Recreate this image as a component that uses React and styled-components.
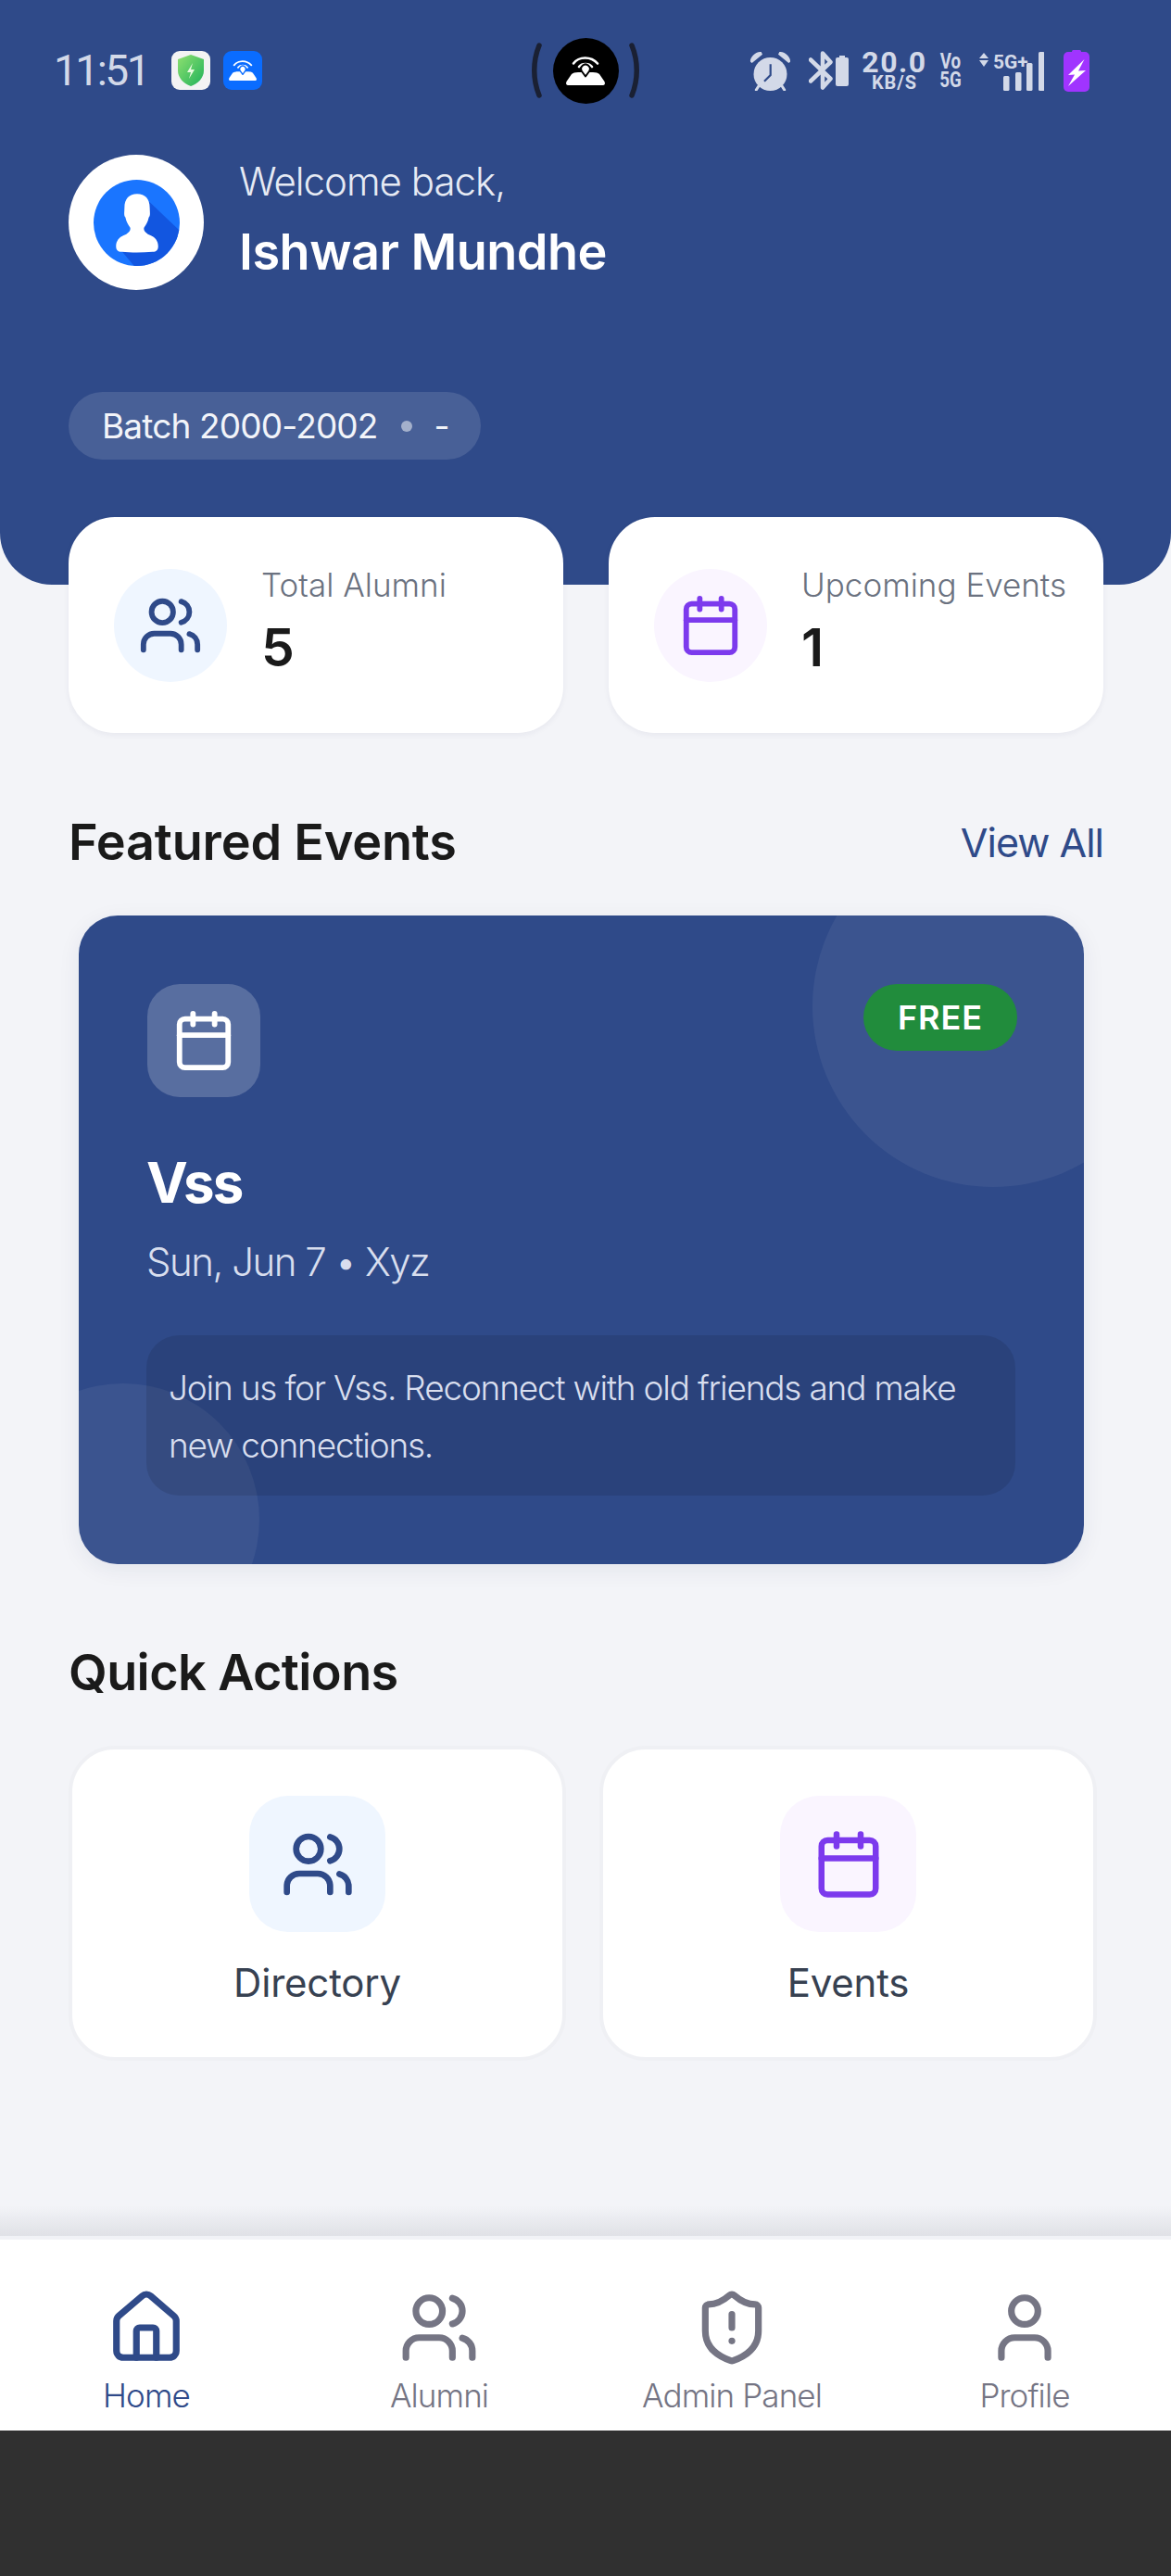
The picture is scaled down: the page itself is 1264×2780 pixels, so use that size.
import styled, { createGlobalStyle } from 'styled-components'
import { Users, Calendar, House, ShieldAlert, User } from 'lucide-react'

const NAVY = '#2f4a89'
const PURPLE = '#7c3aed'
const GREY = '#757584'
const STATUS = '#d3d9e8'

const GlobalStyle = createGlobalStyle`
    html, body {
        margin: 0;
        padding: 0;
        background: #f3f4f8;
        font-family: Inter, "Noto Sans", sans-serif;
    }
    * { box-sizing: border-box; }
`
const Page = styled.div`
    width: 1264px;
    height: 2780px;
    display: flex;
    flex-direction: column;
    background: #f3f4f8;
    overflow: hidden;
`
const Header = styled.header`
    height: 631px;
    flex-shrink: 0;
    background: ${NAVY};
    border-radius: 0 0 56px 56px;
`
const StatusBar = styled.div`
    height: 152px;
    display: grid;
    grid-template-columns: 514px 120px 1fr;
    align-items: center;
    padding: 0 88px 0 58px;
`
const StatusLeft = styled.div`
    display: flex;
    align-items: center;
`
const Clock = styled.span`
    width: 95px;
    margin-right: 32px;
    font-family: Roboto, sans-serif;
    font-size: 46px;
    letter-spacing: -2.5px;
    color: ${STATUS};
`
const AppBadge = styled.span`
    width: 42px;
    height: 42px;
    margin-right: 14px;
    border-radius: 9px;
    display: flex;
    align-items: center;
    justify-content: center;
    background: ${({ $bg }) => $bg};
`
const Island = styled.div`
    width: 120px;
    display: flex;
    align-items: center;
    justify-content: space-between;
`
const IslandDot = styled.span`
    width: 71px;
    height: 71px;
    border-radius: 50%;
    background: #000;
    display: flex;
    align-items: center;
    justify-content: center;
`
const StatusRight = styled.div`
    display: flex;
    align-items: center;
    justify-content: flex-end;
    gap: 15px;
`
const BtGroup = styled.span`
    display: flex;
    align-items: center;
    gap: 3px;
    margin-left: 4px;
`
const NetSpeed = styled.span`
    width: 69px;
    display: flex;
    flex-direction: column;
    align-items: center;
    font-family: Roboto, sans-serif;
    font-weight: 700;
    color: ${STATUS};
`
const SpeedValue = styled.span`
    font-size: 32px;
    line-height: 26px;
    letter-spacing: 1.5px;
`
const SpeedUnit = styled.span`
    font-size: 20px;
    line-height: 18px;
    letter-spacing: 1px;
`
const Volte = styled.span`
    width: 24px;
    margin: 0 -1px;
    display: flex;
    flex-direction: column;
    align-items: center;
    font-family: Roboto, sans-serif;
    font-weight: 700;
    font-size: 24px;
    line-height: 20px;
    transform: scaleX(0.78);
    color: ${STATUS};
`
const Signal = styled.span`
    position: relative;
    width: 71px;
    height: 44px;
    margin: 0 6px 0 4px;
    display: block;
`
const SignalLabel = styled.span`
    position: absolute;
    left: 16px;
    top: 2px;
    font-family: Roboto, sans-serif;
    font-weight: 700;
    font-size: 21px;
    line-height: 22px;
    color: ${STATUS};
`
const Profile = styled.div`
    margin: 15px 0 0 74px;
    display: flex;
    align-items: center;
    gap: 38px;
`
const Avatar = styled.div`
    width: 146px;
    height: 146px;
    border-radius: 50%;
    background: #fff;
    display: flex;
    align-items: center;
    justify-content: center;
`
const Greeting = styled.div`
    margin-bottom: 7px;
    display: flex;
    flex-direction: column;
`
const Welcome = styled.span`
    font-size: 42px;
    line-height: 56px;
    font-weight: 300;
    letter-spacing: -1px;
    color: #e6eaf4;
`
const Name = styled.span`
    margin-top: 15px;
    font-size: 54px;
    line-height: 66px;
    font-weight: 600;
    letter-spacing: -0.5px;
    color: #fff;
`
const BatchPill = styled.div`
    width: 445px;
    height: 73px;
    margin: 110px 0 0 74px;
    padding-left: 36px;
    border-radius: 37px;
    background: rgba(255, 255, 255, 0.12);
    display: flex;
    align-items: center;
    font-size: 37px;
    letter-spacing: -0.85px;
    color: #f2f4f9;
`
const BatchDot = styled.span`
    width: 12px;
    height: 12px;
    margin: 0 24px 0 25px;
    border-radius: 50%;
    background: rgba(255, 255, 255, 0.5);
`
const StatsRow = styled.section`
    margin-top: -73px;
    padding: 0 73px 0 74px;
    display: grid;
    grid-template-columns: 1fr 1fr;
    gap: 49px;
`
const StatCard = styled.div`
    height: 233px;
    padding: 0 20px 0 49px;
    border-radius: 50px;
    background: #fff;
    box-shadow: 0 2px 6px rgba(30, 40, 80, 0.06);
    display: flex;
    align-items: center;
    gap: 37px;
`
const StatIcon = styled.span`
    width: 122px;
    height: 122px;
    flex-shrink: 0;
    border-radius: 50%;
    background: ${({ $bg }) => $bg};
    color: ${({ $color }) => $color};
    display: flex;
    align-items: center;
    justify-content: center;
`
const StatText = styled.div`
    margin-bottom: 9px;
    display: flex;
    flex-direction: column;
`
const StatLabel = styled.span`
    font-size: 35px;
    line-height: 44px;
    font-weight: 300;
    color: #6b7280;
    white-space: nowrap;
`
const StatValue = styled.span`
    margin-top: 13px;
    font-size: 57px;
    line-height: 66px;
    font-weight: 600;
    color: #1a1a1a;
`
const SectionHead = styled.div`
    margin-top: ${({ $top }) => $top}px;
    padding: 0 73px 0 74px;
    display: flex;
    align-items: center;
    justify-content: space-between;
`
const SectionTitle = styled.h2`
    margin: 0;
    font-size: 54px;
    line-height: 66px;
    font-weight: 600;
    letter-spacing: ${({ $track }) => $track}px;
    color: #1a1a1a;
`
const ViewAll = styled.a`
    font-size: 43px;
    font-weight: 400;
    letter-spacing: -1px;
    color: ${NAVY};
`
const EventCard = styled.article`
    position: relative;
    height: 700px;
    margin: 46px 94px 0 85px;
    padding: 74px;
    border-radius: 42px;
    background: ${NAVY};
    box-shadow: 0 6px 24px rgba(30, 40, 80, 0.07);
    overflow: hidden;
`
const Bubble = styled.span`
    position: absolute;
    border-radius: 50%;
    background: rgba(255, 255, 255, 0.06);
`
const BubbleTop = styled(Bubble)`
    width: 390px;
    height: 390px;
    top: -97px;
    right: -97px;
`
const BubbleBottom = styled(Bubble)`
    width: 294px;
    height: 294px;
    bottom: -99px;
    left: -99px;
`
const EventTop = styled.div`
    position: relative;
    display: flex;
    align-items: flex-start;
    justify-content: space-between;
`
const EventIcon = styled.span`
    width: 122px;
    height: 122px;
    border-radius: 35px;
    background: rgba(255, 255, 255, 0.2);
    color: #fff;
    display: flex;
    align-items: center;
    justify-content: center;
`
const FreeBadge = styled.span`
    width: 166px;
    height: 72px;
    margin-right: -2px;
    border-radius: 36px;
    background: #218c3c;
    color: #fff;
    display: flex;
    align-items: center;
    justify-content: center;
    font-size: 36px;
    font-weight: 600;
    letter-spacing: 1px;
`
const EventTitle = styled.h3`
    position: relative;
    margin: 56px 0 0 -1px;
    font-size: 60px;
    line-height: 72px;
    font-weight: 700;
    letter-spacing: -2px;
    color: #fff;
`
const EventMeta = styled.p`
    position: relative;
    margin: 25px 0 0 -1px;
    font-size: 42px;
    line-height: 50px;
    font-weight: 300;
    letter-spacing: -1.5px;
    color: #d8deee;
`
const EventDesc = styled.p`
    position: relative;
    height: 173px;
    margin: 54px 0 0 -1px;
    padding: 26px 24px 0;
    border-radius: 35px;
    background: rgba(0, 0, 0, 0.1);
    font-size: 37px;
    line-height: 62px;
    font-weight: 300;
    letter-spacing: -1.2px;
    color: #d8deee;
`
const ActionRow = styled.section`
    margin-top: 46px;
    padding: 0 80px 0 74px;
    display: grid;
    grid-template-columns: 1fr 1fr;
    gap: 36px;
`
const ActionCard = styled.div`
    height: 340px;
    padding-top: 50px;
    border: 4px solid #eff0f4;
    border-radius: 50px;
    background: #fff;
    display: flex;
    flex-direction: column;
    align-items: center;
`
const ActionIcon = styled.span`
    width: 147px;
    height: 147px;
    border-radius: 42px;
    background: ${({ $bg }) => $bg};
    color: ${({ $color }) => $color};
    display: flex;
    align-items: center;
    justify-content: center;
`
const ActionLabel = styled.span`
    margin-top: 30px;
    font-size: 42px;
    line-height: 50px;
    letter-spacing: -0.2px;
    color: #374151;
`
const NavShade = styled.div`
    height: 33px;
    margin-top: auto;
    background: linear-gradient(to bottom, rgba(30, 35, 50, 0), rgba(30, 35, 50, 0.09));
`
const NavBar = styled.nav`
    height: 210px;
    flex-shrink: 0;
    border-top: 4px solid #f1f2f6;
    padding-top: 52px;
    background: #fff;
    display: grid;
    grid-template-columns: repeat(4, 1fr);
`
const NavItem = styled.a`
    display: flex;
    flex-direction: column;
    align-items: center;
    gap: 8px;
    color: ${({ $active }) => ($active ? NAVY : GREY)};
`
const NavLabel = styled.span`
    font-size: 35px;
    line-height: 44px;
    font-weight: 300;
    letter-spacing: -0.9px;
`
const BottomStrip = styled.div`
    flex: 0 0 157px;
    background: #303030;
`

// halo is the colour behind the glyph, it cuts the pin out of the tray
function RouterGlyph({ width, halo }) {
    return (
        <svg width={width} viewBox="0 0 42 31" fill="none">
            <path d="M3 31Q-1 31 .5 27L6 19Q8 17 13 17L29 17Q34 17 36 19L41.500 27Q43 31 39 31Z" fill="#fff" />
            <path d="M8 7.500C14-.5 27-.5 34 7.500M14 11C17.500 7 24.500 7 28 11" stroke="#fff" strokeWidth="2.600" strokeLinecap="round" />
            <path d="M21 21.500l-4-5.500a4.800 4.800 0 1 1 8 0z" fill="#fff" stroke={halo} strokeWidth="2" strokeLinejoin="round" />
        </svg>
    )
}

function ShieldGlyph() {
    return (
        <svg width="30" height="36" viewBox="0 0 30 36">
            <defs>
                <linearGradient id="shieldFill" x1="0" y1="0" x2="1" y2="1">
                    <stop offset="0" stopColor="#8fe070" />
                    <stop offset="1" stopColor="#1fb25a" />
                </linearGradient>
            </defs>
            <path d="M15 1l14 5v12c0 8-6 14-14 17C7 32 1 26 1 18V6z" fill="url(#shieldFill)" />
            <path d="M17 10l-6 10h4l-2 7 6-10h-4z" fill="#e8fbe0" />
        </svg>
    )
}

function AlarmGlyph() {
    return (
        <svg width="45" height="44" viewBox="0 0 45 44">
            <path d="M1 12.700C0 8 7 1 12.700 2L14 4.700 2.700 14zM44 12.700C45 8 38 1 32.300 2L31 4.700 42.300 14z" fill={STATUS} />
            <path d="M10 38.700L7.300 43M35 38.700L37.700 43" stroke={STATUS} strokeWidth="3" strokeLinecap="round" />
            <circle cx="22.500" cy="26" r="18" fill={STATUS} />
            <path d="M22.700 15.300V27L16 33.700" stroke={NAVY} strokeWidth="2.200" fill="none" />
        </svg>
    )
}

function BluetoothGlyph() {
    return (
        <svg width="26" height="42" viewBox="0 0 26 42" fill="none">
            <path d="M2 9.500L23.500 30 15 39.500V2.500L23.500 12 2 32.500" stroke={STATUS} strokeWidth="4.500" strokeLinejoin="round" strokeLinecap="round" />
        </svg>
    )
}

function SignalGlyph() {
    return (
        <svg width="71" height="44" viewBox="0 0 71 44" fill={STATUS}>
            <path d="M6 3l5 6H1zM6 18l5-7H1z" />
            <rect x="27" y="28" width="6.500" height="16" rx="1.500" />
            <rect x="40" y="24" width="6.500" height="20" rx="1.500" />
            <rect x="52" y="14" width="6.500" height="30" rx="1.500" />
            <rect x="65" y="2" width="6.500" height="42" rx="1.500" />
        </svg>
    )
}

function BatteryGlyph() {
    return (
        <svg width="28" height="45" viewBox="0 0 28 45">
            <rect x="9" y="0" width="10" height="4" rx="1.500" fill="#a034ff" />
            <rect x="0" y="2" width="28" height="43" rx="5" fill="#a034ff" />
            <path d="M22.500 10L5 27l7-.5L5 39l19-17-8 .5z" fill="#fff" />
        </svg>
    )
}

function PersonAvatar() {
    return (
        <svg width="93" height="93" viewBox="0 0 92 92">
            <defs>
                <clipPath id="avatarClip">
                    <circle cx="46" cy="46" r="46" />
                </clipPath>
            </defs>
            <circle cx="46" cy="46" r="46" fill="#1a75ff" />
            <path d="M59 23L98 60V100H50L29 75z" fill="#1256e0" clipPath="url(#avatarClip)" />
            <path d="M46.500 15C55 15 60 20 60 30C60 34 61 38 59 40C58 45 56 48 54 51C53 54 55 56 58 58C64 60 69 64 69 71C69 75 67 77 63 77C52 78 40 78 30 77C26 77 24 75 24 71C24 64 29 60 35 58C38 56 40 54 39 51C37 48 35 45 34 40C32 38 33 34 33 30C33 20 38 15 46.500 15Z" fill="#fff" />
        </svg>
    )
}

function Paren({ flip }) {
    return (
        <svg width="13" height="60" viewBox="0 0 13 60" fill="none">
            <path d={flip ? 'M3 3c7 17 7 37 0 54' : 'M10 3C3 20 3 40 10 57'} stroke="#1a2033" strokeWidth="5.500" strokeLinecap="round" />
        </svg>
    )
}

export default function App() {
    return (
        <>
            <GlobalStyle />
            <Page>
                <Header>
                    <StatusBar>
                        <StatusLeft>
                            <Clock>11:51</Clock>
                            <AppBadge $bg="#f3f3f3"><ShieldGlyph /></AppBadge>
                            <AppBadge $bg="#0a6cff"><RouterGlyph width={30} halo="#0a6cff" /></AppBadge>
                        </StatusLeft>
                        <Island>
                            <Paren />
                            <IslandDot><RouterGlyph width={42} halo="#000" /></IslandDot>
                            <Paren flip />
                        </Island>
                        <StatusRight>
                            <AlarmGlyph />
                            <BtGroup>
                                <BluetoothGlyph />
                                <svg width="14" height="33" viewBox="0 0 14 33" fill={STATUS}>
                                    <rect x="4" y="0" width="6" height="3" />
                                    <rect x="0" y="2" width="14" height="31" rx="2" />
                                </svg>
                            </BtGroup>
                            <NetSpeed>
                                <SpeedValue>20.0</SpeedValue>
                                <SpeedUnit>KB/S</SpeedUnit>
                            </NetSpeed>
                            <Volte>
                                <span>Vo</span>
                                <span>5G</span>
                            </Volte>
                            <Signal>
                                <SignalGlyph />
                                <SignalLabel>5G+</SignalLabel>
                            </Signal>
                            <BatteryGlyph />
                        </StatusRight>
                    </StatusBar>
                    <Profile>
                        <Avatar><PersonAvatar /></Avatar>
                        <Greeting>
                            <Welcome>Welcome back,</Welcome>
                            <Name>Ishwar Mundhe</Name>
                        </Greeting>
                    </Profile>
                    <BatchPill>
                        Batch 2000-2002
                        <BatchDot />
                        -
                    </BatchPill>
                </Header>

                <StatsRow>
                    <StatCard>
                        <StatIcon $bg="#eff6ff" $color={NAVY}><Users size={70} /></StatIcon>
                        <StatText>
                            <StatLabel>Total Alumni</StatLabel>
                            <StatValue>5</StatValue>
                        </StatText>
                    </StatCard>
                    <StatCard>
                        <StatIcon $bg="#faf5ff" $color={PURPLE}><Calendar size={70} /></StatIcon>
                        <StatText>
                            <StatLabel>Upcoming Events</StatLabel>
                            <StatValue>1</StatValue>
                        </StatText>
                    </StatCard>
                </StatsRow>

                <SectionHead $top={85}>
                    <SectionTitle $track={-0.2}>Featured Events</SectionTitle>
                    <ViewAll>View All</ViewAll>
                </SectionHead>

                <EventCard>
                    <BubbleTop />
                    <BubbleBottom />
                    <EventTop>
                        <EventIcon><Calendar size={70} /></EventIcon>
                        <FreeBadge>FREE</FreeBadge>
                    </EventTop>
                    <EventTitle>Vss</EventTitle>
                    <EventMeta>Sun, Jun 7 • Xyz</EventMeta>
                    <EventDesc>Join us for Vss. Reconnect with old friends and make new connections.</EventDesc>
                </EventCard>

                <SectionHead $top={84}>
                    <SectionTitle $track={-0.6}>Quick Actions</SectionTitle>
                </SectionHead>

                <ActionRow>
                    <ActionCard>
                        <ActionIcon $bg="#eff6ff" $color={NAVY}><Users size={80} /></ActionIcon>
                        <ActionLabel>Directory</ActionLabel>
                    </ActionCard>
                    <ActionCard>
                        <ActionIcon $bg="#faf5ff" $color={PURPLE}><Calendar size={78} /></ActionIcon>
                        <ActionLabel>Events</ActionLabel>
                    </ActionCard>
                </ActionRow>

                <NavShade />
                <NavBar>
                    <NavItem $active><House size={86} /><NavLabel>Home</NavLabel></NavItem>
                    <NavItem><Users size={86} /><NavLabel>Alumni</NavLabel></NavItem>
                    <NavItem><ShieldAlert size={86} /><NavLabel>Admin Panel</NavLabel></NavItem>
                    <NavItem><User size={86} /><NavLabel>Profile</NavLabel></NavItem>
                </NavBar>
                <BottomStrip />
            </Page>
        </>
    )
}
